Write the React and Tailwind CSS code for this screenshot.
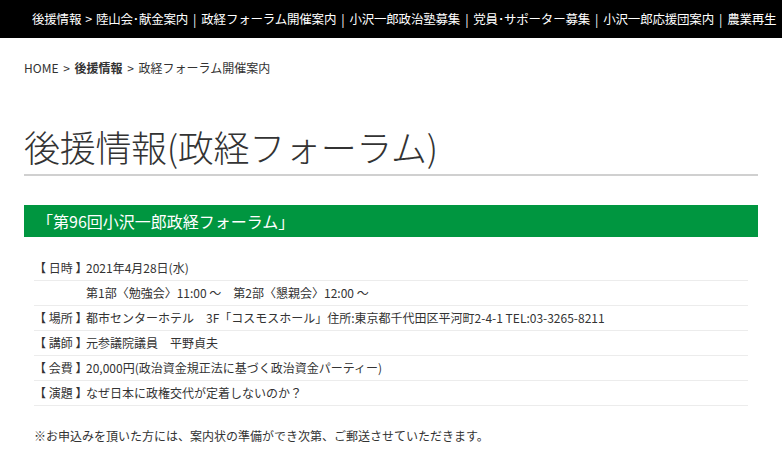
const navItems = [
  "後援情報",
  "陸山会･献金案内",
  "政経フォーラム開催案内",
  "小沢一郎政治塾募集",
  "党員･サポーター募集",
  "小沢一郎応援団案内",
  "農業再生",
];

const rows = [
  { label: "日時", value: "2021年4月28日(水)" },
  { label: "", value: "第1部〈勉強会〉11:00 ～　第2部〈懇親会〉12:00 ～" },
  { label: "場所", value: "都市センターホテル　3F「コスモスホール」住所:東京都千代田区平河町2-4-1 TEL:03-3265-8211" },
  { label: "講師", value: "元参議院議員　平野貞夫" },
  { label: "会費", value: "20,000円(政治資金規正法に基づく政治資金パーティー)" },
  { label: "演題", value: "なぜ日本に政権交代が定着しないのか？" },
];

export default function App() {
  return (
    <div className="w-[782px] h-[459px] overflow-hidden bg-white text-[#333] font-['Noto_Sans_CJK_JP','Noto_Sans',sans-serif]">
      <nav className="h-[38px] bg-black flex items-center pl-8 whitespace-nowrap overflow-hidden">
        <span className="text-white text-[12.5px] leading-none tracking-[-0.2px]">
          {navItems[0]}
          <span className="mx-[4px]">&gt;</span>
          {navItems.slice(1).map((item, i) => (
            <span key={item}>
              {i > 0 && <span className="mx-[5px]">|</span>}
              {item}
            </span>
          ))}
        </span>
      </nav>

      <div className="px-6">
        <div className="mt-[21px] text-[12px] leading-[18px] text-[#333]">
          HOME <span className="mx-0.5">&gt;</span> <span className="font-bold">後援情報</span>{" "}
          <span className="mx-0.5">&gt;</span> 政経フォーラム開催案内
        </div>

        <h1 className="mt-[48px] text-[36px] leading-[42px] font-light tracking-[-0.3px] text-[#333] font-['Noto_Sans_CJK_JP',serif]">
          後援情報(政経フォーラム)
        </h1>

        <div className="mt-[7px] h-[2px] bg-[#d0d0d0]" />

        <div className="mt-[29px] h-[32px] bg-[#009640] flex items-center pl-[13px]">
          <span className="text-white text-[16px] leading-none">「第96回小沢一郎政経フォーラム」</span>
        </div>

        <div className="mt-[19px] mx-[10px]">
          {rows.map((row, i) => (
            <div key={i} className="h-[25px] flex items-center border-b border-[#ececec] text-[12px] whitespace-nowrap">
              <span className="w-[52px] shrink-0">{row.label ? `【 ${row.label} 】` : ""}</span>
              <span>{row.value}</span>
            </div>
          ))}
        </div>

        <p className="mt-[21px] ml-[10px] text-[12px] leading-[18px]">
          ※お申込みを頂いた方には、案内状の準備ができ次第、ご郵送させていただきます。
        </p>
      </div>
    </div>
  );
}
